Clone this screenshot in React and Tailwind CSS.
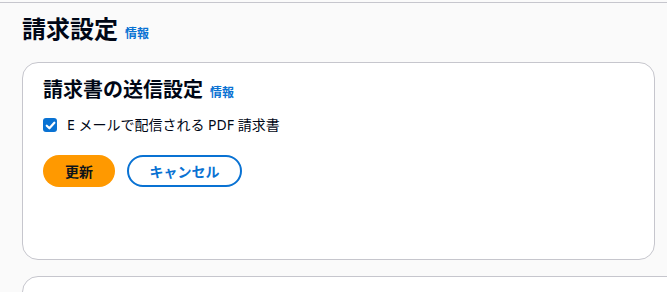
import React from "react";

const font = { fontFamily: '"Noto Sans", "Noto Sans CJK JP", sans-serif' };

const InfoLink = () => (
  <a className="text-[12px] font-bold text-[#0972d3] leading-none" href="#">
    情報
  </a>
);

const CheckBox = () => (
  <span className="flex h-[14px] w-[14px] shrink-0 items-center justify-center rounded-[3px] bg-[#0972d3]">
    <svg width="11" height="11" viewBox="0 0 10 10" fill="none">
      <path
        d="M1.6 5.2 L4 7.5 L8.5 2.5"
        stroke="white"
        strokeWidth="2"
        strokeLinecap="round"
        strokeLinejoin="round"
      />
    </svg>
  </span>
);

const App = () => {
  return (
    <div
      className="h-[292px] w-full overflow-hidden bg-[#fafafa] text-[#000716]"
      style={font}
    >
      <div className="h-[2px] bg-[#fafafa]" />
      <div className="border-t border-[#c6c6cd] pl-[22px]">
        <div className="flex items-baseline gap-[7px] pt-[11px] h-[43px]">
          <h1 className="text-[24px] font-bold leading-[30px]">請求設定</h1>
          <InfoLink />
        </div>

        <div className="mt-[16px] w-[633px] rounded-[16px] border border-[#c6c6cd] bg-white px-[20px] pt-[15px] pb-[72px]">
          <div className="flex items-baseline gap-[7px]">
            <h2 className="text-[20px] font-bold leading-[24px]">
              請求書の送信設定
            </h2>
            <InfoLink />
          </div>

          <label className="mt-[13px] flex items-center gap-[10px] text-[14px] leading-[20px]">
            <CheckBox />
            <span>E メールで配信される PDF 請求書</span>
          </label>

          <div className="mt-[20px] flex items-center gap-[12px]">
            <button className="h-[32px] w-[72px] rounded-full bg-[#ff9900] text-[14px] font-bold text-[#0f141a]">
              更新
            </button>
            <button className="h-[32px] w-[115px] rounded-full border-2 border-[#0972d3] bg-white text-[14px] font-bold text-[#0972d3]">
              キャンセル
            </button>
          </div>
        </div>

        <div className="mt-[16px] h-[60px] w-[700px] rounded-[16px] border border-[#c6c6cd] bg-white" />
      </div>
    </div>
  );
};

export default App;
